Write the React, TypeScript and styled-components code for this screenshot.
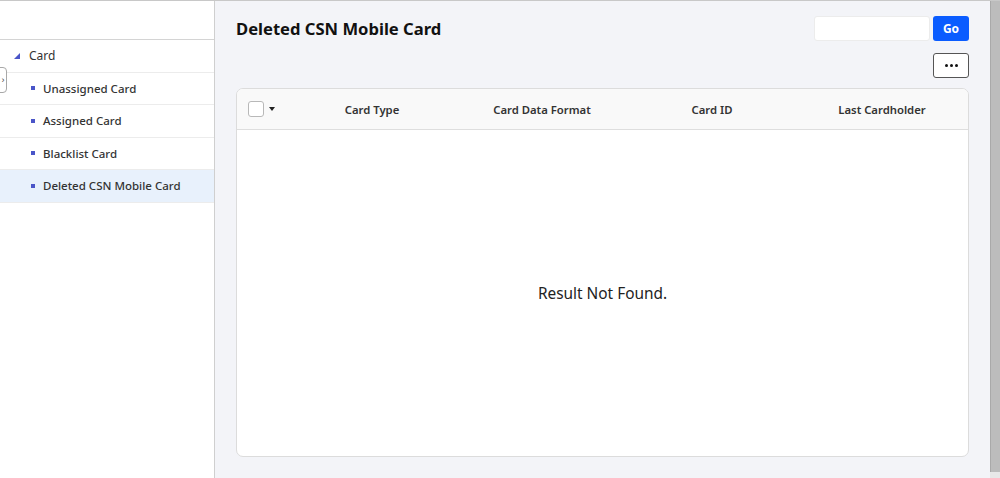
import * as React from "react";
import styled, { createGlobalStyle } from "styled-components";

const GlobalStyle = createGlobalStyle`
  html, body { margin: 0; padding: 0; height: 100%; overflow: hidden; }
  body { font-family: "Noto Sans", "Open Sans", Arial, sans-serif; color: #222; }
  #root { height: 100%; }
`;

const Page = styled.div`
  display: flex;
  height: 478px;
  border-top: 1px solid #c8c8c8;
  box-sizing: border-box;
  background: #f3f4f8;
`;

const Sidebar = styled.aside`
  position: relative;
  width: 214px;
  flex-shrink: 0;
  background: #fff;
  border-right: 1px solid #cfcfcf;
  padding-top: 38px;
`;

const TreeList = styled.ul`
  list-style: none;
  margin: 0;
  padding: 0;
  border-top: 1px solid #d4d4d4;
`;

const TreeRow = styled.li<{ $child?: boolean; $active?: boolean }>`
  display: flex;
  align-items: center;
  height: 31.5px;
  padding-left: ${(p) => (p.$child ? "31px" : "14px")};
  border-bottom: 1px solid #ececec;
  background: ${(p) => (p.$active ? "#e8f1fc" : "transparent")};
  font-size: ${(p) => (p.$child ? "11.5px" : "12px")};
  font-weight: ${(p) => (p.$child ? 500 : 400)};
  color: #333;
  gap: ${(p) => (p.$child ? "8px" : "9px")};
`;

const Bullet = styled.span`
  width: 4px;
  height: 4px;
  background: #4a55c8;
`;

const CollapseToggle = styled.button`
  position: absolute;
  left: -4px;
  top: 66px;
  width: 11px;
  height: 26px;
  border: 1px solid #a8a8a8;
  border-radius: 0 4px 4px 0;
  background: #fff;
  padding: 0 0 0 3px;
  font-size: 9px;
  line-height: 1;
  color: #444;
  display: flex;
  align-items: center;
  justify-content: center;
`;

const Main = styled.main`
  flex: 1;
  display: flex;
  flex-direction: column;
  padding: 14px 21px 21px 21px;
  min-width: 0;
`;

const TopBar = styled.div`
  display: flex;
  align-items: center;
  justify-content: space-between;
  height: 26px;
`;

const Title = styled.h1`
  margin: 0;
  font-size: 16.6px;
  font-weight: 700;
  color: #111;
`;

const SearchGroup = styled.div`
  display: flex;
  gap: 3px;
`;

const SearchInput = styled.input`
  width: 116px;
  height: 25px;
  box-sizing: border-box;
  border: 1px solid #ececec;
  border-radius: 3px;
  background: #fff;
  outline: none;
`;

const GoButton = styled.button`
  width: 36px;
  height: 25px;
  border: none;
  border-radius: 3px;
  background: #0a5cff;
  color: #fff;
  font-family: inherit;
  font-size: 12px;
  font-weight: 700;
  padding: 0;
`;

const ActionRow = styled.div`
  display: flex;
  justify-content: flex-end;
  margin-top: 12px;
`;

const MoreButton = styled.button`
  width: 36px;
  height: 25px;
  box-sizing: border-box;
  border: 1.5px solid #555;
  border-radius: 3px;
  background: #fff;
  display: flex;
  align-items: center;
  justify-content: center;
  gap: 2px;
  padding: 0;
`;

const Dot = styled.span`
  width: 3px;
  height: 3px;
  border-radius: 50%;
  background: #111;
`;

const TableCard = styled.div`
  flex: 1;
  margin-top: 10px;
  background: #fff;
  border: 1px solid #dcdcdc;
  border-radius: 7px;
  display: flex;
  flex-direction: column;
  overflow: hidden;
`;

const HeaderRow = styled.div`
  display: grid;
  grid-template-columns: 50px repeat(4, 170px) 1fr;
  align-items: center;
  height: 40px;
  background: #f9f9f9;
  border-bottom: 1px solid #dedede;
  font-size: 11.3px;
  font-weight: 600;
  color: #333;
`;

const CheckCell = styled.div`
  display: flex;
  align-items: center;
  padding-left: 11px;
  gap: 5px;
`;

const CheckBox = styled.span`
  width: 14px;
  height: 14px;
  border: 1px solid #b8b8b8;
  border-radius: 3px;
  background: #fff;
`;

const Caret = styled.span`
  width: 0;
  height: 0;
  border-left: 3.5px solid transparent;
  border-right: 3.5px solid transparent;
  border-top: 4px solid #222;
`;

const HeadCell = styled.div`
  text-align: center;
`;

const EmptyBody = styled.div`
  flex: 1;
  display: flex;
  align-items: center;
  justify-content: center;
  font-size: 15.4px;
  color: #222;
`;

const ScrollStrip = styled.div`
  width: 10px;
  flex-shrink: 0;
  display: flex;
  flex-direction: column;
`;

const StripTrack = styled.div`
  flex: 1;
  background: #bcbcbc;
  border-left: 1px solid #a9a9a9;
`;

const StripFoot = styled.div`
  height: 6px;
  background: #e8e8e8;
`;

const children = ["Unassigned Card", "Assigned Card", "Blacklist Card", "Deleted CSN Mobile Card"];
const columns = ["Card Type", "Card Data Format", "Card ID", "Last Cardholder"];

const App: React.FC = () => {
  return (
    <>
      <GlobalStyle />
      <Page>
        <Sidebar>
          <CollapseToggle>›</CollapseToggle>
          <TreeList>
            <TreeRow>
              <svg width="6" height="6" viewBox="0 0 6 6">
                <polygon points="6,0 6,6 0,6" fill="#4a55c8" />
              </svg>
              Card
            </TreeRow>
            {children.map((c) => (
              <TreeRow key={c} $child $active={c === "Deleted CSN Mobile Card"}>
                <Bullet />
                {c}
              </TreeRow>
            ))}
          </TreeList>
        </Sidebar>
        <Main>
          <TopBar>
            <Title>Deleted CSN Mobile Card</Title>
            <SearchGroup>
              <SearchInput />
              <GoButton>Go</GoButton>
            </SearchGroup>
          </TopBar>
          <ActionRow>
            <MoreButton>
              <Dot />
              <Dot />
              <Dot />
            </MoreButton>
          </ActionRow>
          <TableCard>
            <HeaderRow>
              <CheckCell>
                <CheckBox />
                <Caret />
              </CheckCell>
              {columns.map((c) => (
                <HeadCell key={c}>{c}</HeadCell>
              ))}
            </HeaderRow>
            <EmptyBody>Result Not Found.</EmptyBody>
          </TableCard>
        </Main>
        <ScrollStrip>
          <StripTrack />
          <StripFoot />
        </ScrollStrip>
      </Page>
    </>
  );
};

export default App;
